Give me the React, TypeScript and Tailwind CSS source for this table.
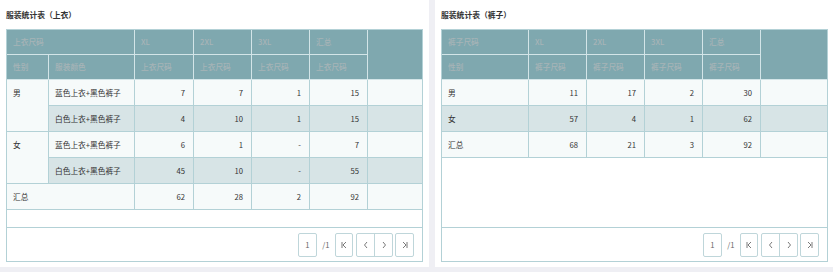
import React from "react";

const TH = "h-[25px] px-[6px] py-0 text-left align-middle font-medium text-[#a7b4b7] bg-[#7fa8af] border-r border-b border-[#d3e5e8] whitespace-nowrap";
const THL = "h-[25px] px-[6px] py-0 text-left align-middle font-medium text-[#a7b4b7] bg-[#7fa8af] border-b border-[#d3e5e8]";
const TD = "h-[26px] px-[6px] py-0 align-middle border-r border-b border-[#b3d1d6] whitespace-nowrap";
const TDN = "h-[26px] pl-[6px] pr-[8px] py-0 text-right align-middle border-r border-b border-[#b3d1d6]";
const TDL = "h-[26px] py-0 border-b border-[#b3d1d6]";

const LIGHT = "bg-[#f6fafa]";
const ALT = "bg-[#d7e4e6]";

function Btn({ children, className = "" }: { children: React.ReactNode; className?: string }) {
  return (
    <div className={"h-[24px] flex items-center justify-center bg-white border border-[#bfd6da] rounded-[2px] text-[#666] " + className}>
      {children}
    </div>
  );
}

function Pager() {
  const s = { stroke: "#7a7a7a", strokeWidth: 1, fill: "none" };
  return (
    <div className="h-[34px] shrink-0 border-t border-[#b3d1d6] flex items-center justify-end pr-[8px] bg-white">
      <Btn className="w-[19px]">1</Btn>
      <span className="w-[18px] text-center text-[#666]">/1</span>
      <Btn className="w-[18px]">
        <svg width="8" height="8" viewBox="0 0 8 8">
          <line x1="2" y1="1" x2="2" y2="7" {...s} />
          <polyline points="6,1 3,4 6,7" {...s} />
        </svg>
      </Btn>
      <div className="ml-[3px] h-[24px] w-[37px] flex bg-white border border-[#bfd6da] rounded-[2px]">
        <div className="flex-1 flex items-center justify-center border-r border-[#bfd6da]">
          <svg width="8" height="8" viewBox="0 0 8 8">
            <polyline points="5,1 2.5,4 5,7" {...s} />
          </svg>
        </div>
        <div className="flex-1 flex items-center justify-center">
          <svg width="8" height="8" viewBox="0 0 8 8">
            <polyline points="3,1 5.5,4 3,7" {...s} />
          </svg>
        </div>
      </div>
      <Btn className="ml-[2px] w-[19px]">
        <svg width="8" height="8" viewBox="0 0 8 8">
          <polyline points="2,1 5,4 2,7" {...s} />
          <line x1="6" y1="1" x2="6" y2="7" {...s} />
        </svg>
      </Btn>
    </div>
  );
}

function Num({ v, bg }: { v: string; bg: string }) {
  return <td className={TDN + " " + bg}>{v}</td>;
}

function TopTable() {
  const rows: { g?: string; span?: number; c: string; v: string[]; bg: string }[] = [
    { g: "男", span: 2, c: "蓝色上衣+黑色裤子", v: ["7", "7", "1", "15"], bg: LIGHT },
    { c: "白色上衣+黑色裤子", v: ["4", "10", "1", "15"], bg: ALT },
    { g: "女", span: 2, c: "蓝色上衣+黑色裤子", v: ["6", "1", "-", "7"], bg: LIGHT },
    { c: "白色上衣+黑色裤子", v: ["45", "10", "-", "55"], bg: ALT },
  ];
  return (
    <table className="w-full table-fixed border-separate border-spacing-0">
      <colgroup>
        <col className="w-[42px]" />
        <col className="w-[86px]" />
        <col className="w-[59px]" />
        <col className="w-[58px]" />
        <col className="w-[58px]" />
        <col className="w-[58px]" />
        <col />
      </colgroup>
      <thead>
        <tr>
          <th colSpan={2} className={TH}>上衣尺码</th>
          <th className={TH}>XL</th>
          <th className={TH}>2XL</th>
          <th className={TH}>3XL</th>
          <th className={TH}>汇总</th>
          <th rowSpan={2} className={THL}></th>
        </tr>
        <tr>
          <th className={TH}>性别</th>
          <th className={TH}>服装颜色</th>
          <th className={TH}>上衣尺码</th>
          <th className={TH}>上衣尺码</th>
          <th className={TH}>上衣尺码</th>
          <th className={TH}>上衣尺码</th>
        </tr>
      </thead>
      <tbody className="text-[#333]">
        {rows.map((r, i) => (
          <tr key={i}>
            {r.g && (
              <td rowSpan={r.span} className={TD + " align-top pt-[9px] " + LIGHT}>
                {r.g}
              </td>
            )}
            <td className={TD + " " + r.bg}>{r.c}</td>
            {r.v.map((x, j) => (
              <Num key={j} v={x} bg={r.bg} />
            ))}
            <td className={TDL + " " + r.bg}></td>
          </tr>
        ))}
        <tr>
          <td colSpan={2} className={TD + " " + LIGHT}>汇总</td>
          {["62", "28", "2", "92"].map((x, j) => (
            <Num key={j} v={x} bg={LIGHT} />
          ))}
          <td className={TDL + " " + LIGHT}></td>
        </tr>
      </tbody>
    </table>
  );
}

function BottomTable() {
  const rows = [
    { g: "男", v: ["11", "17", "2", "30"], bg: LIGHT },
    { g: "女", v: ["57", "4", "1", "62"], bg: ALT },
    { g: "汇总", v: ["68", "21", "3", "92"], bg: LIGHT },
  ];
  return (
    <table className="w-full table-fixed border-separate border-spacing-0">
      <colgroup>
        <col className="w-[87px]" />
        <col className="w-[58px]" />
        <col className="w-[58px]" />
        <col className="w-[58px]" />
        <col className="w-[58px]" />
        <col />
      </colgroup>
      <thead>
        <tr>
          <th className={TH}>裤子尺码</th>
          <th className={TH}>XL</th>
          <th className={TH}>2XL</th>
          <th className={TH}>3XL</th>
          <th className={TH}>汇总</th>
          <th rowSpan={2} className={THL}></th>
        </tr>
        <tr>
          <th className={TH}>性别</th>
          <th className={TH}>裤子尺码</th>
          <th className={TH}>裤子尺码</th>
          <th className={TH}>裤子尺码</th>
          <th className={TH}>裤子尺码</th>
        </tr>
      </thead>
      <tbody className="text-[#333]">
        {rows.map((r, i) => (
          <tr key={i}>
            <td className={TD + " " + r.bg}>{r.g}</td>
            {r.v.map((x, j) => (
              <Num key={j} v={x} bg={r.bg} />
            ))}
            <td className={TDL + " " + r.bg}></td>
          </tr>
        ))}
      </tbody>
    </table>
  );
}

function Panel({ title, children, className = "" }: { title: string; children: React.ReactNode; className?: string }) {
  return (
    <div className={"h-[267px] bg-white flex flex-col px-[6px] pb-[5px] " + className}>
      <div className="h-[29px] shrink-0 flex items-center font-bold text-[#333] text-[7.8px]">{title}</div>
      <div className="flex-1 flex flex-col border border-[#b3d1d6] min-h-0">
        <div className="flex-1 bg-white overflow-hidden">{children}</div>
        <Pager />
      </div>
    </div>
  );
}

export default function App() {
  return (
    <div
      className="w-[833px] h-[272px] bg-[#efeff4] flex gap-[6px] text-[7.7px] leading-none"
      style={{ fontFamily: '"Noto Sans CJK SC", "Noto Sans", sans-serif' }}
    >
      <Panel title="服装统计表（上衣）" className="w-[429px] shrink-0">
        <TopTable />
      </Panel>
      <Panel title="服装统计表（裤子）" className="flex-1 pr-[5px]">
        <BottomTable />
      </Panel>
    </div>
  );
}
